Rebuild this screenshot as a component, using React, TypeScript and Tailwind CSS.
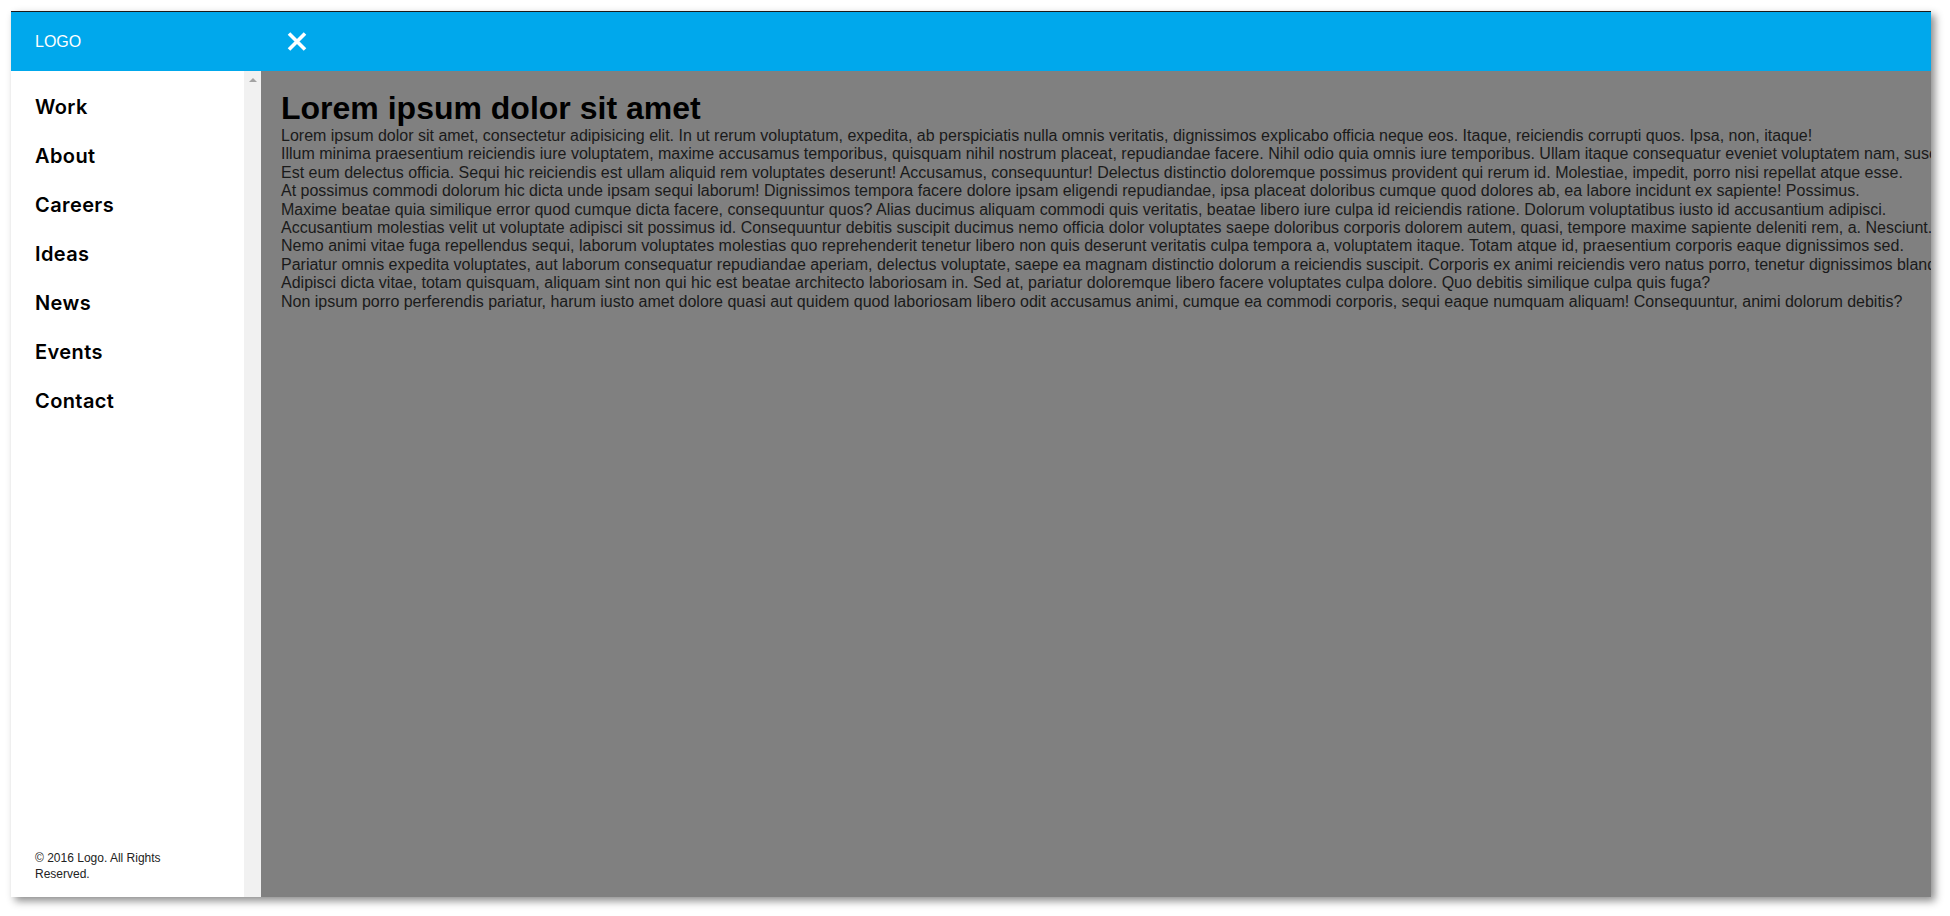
import React from "react";

const navItems = ["Work", "About", "Careers", "Ideas", "News", "Events", "Contact"];

const lines = [
  "Lorem ipsum dolor sit amet, consectetur adipisicing elit. In ut rerum voluptatum, expedita, ab perspiciatis nulla omnis veritatis, dignissimos explicabo officia neque eos. Itaque, reiciendis corrupti quos. Ipsa, non, itaque!",
  "Illum minima praesentium reiciendis iure voluptatem, maxime accusamus temporibus, quisquam nihil nostrum placeat, repudiandae facere. Nihil odio quia omnis iure temporibus. Ullam itaque consequatur eveniet voluptatem nam, suscipit.",
  "Est eum delectus officia. Sequi hic reiciendis est ullam aliquid rem voluptates deserunt! Accusamus, consequuntur! Delectus distinctio doloremque possimus provident qui rerum id. Molestiae, impedit, porro nisi repellat atque esse.",
  "At possimus commodi dolorum hic dicta unde ipsam sequi laborum! Dignissimos tempora facere dolore ipsam eligendi repudiandae, ipsa placeat doloribus cumque quod dolores ab, ea labore incidunt ex sapiente! Possimus.",
  "Maxime beatae quia similique error quod cumque dicta facere, consequuntur quos? Alias ducimus aliquam commodi quis veritatis, beatae libero iure culpa id reiciendis ratione. Dolorum voluptatibus iusto id accusantium adipisci.",
  "Accusantium molestias velit ut voluptate adipisci sit possimus id. Consequuntur debitis suscipit ducimus nemo officia dolor voluptates saepe doloribus corporis dolorem autem, quasi, tempore maxime sapiente deleniti rem, a. Nesciunt.",
  "Nemo animi vitae fuga repellendus sequi, laborum voluptates molestias quo reprehenderit tenetur libero non quis deserunt veritatis culpa tempora a, voluptatem itaque. Totam atque id, praesentium corporis eaque dignissimos sed.",
  "Pariatur omnis expedita voluptates, aut laborum consequatur repudiandae aperiam, delectus voluptate, saepe ea magnam distinctio dolorum a reiciendis suscipit. Corporis ex animi reiciendis vero natus porro, tenetur dignissimos blanditiis.",
  "Adipisci dicta vitae, totam quisquam, aliquam sint non qui hic est beatae architecto laboriosam in. Sed at, pariatur doloremque libero facere voluptates culpa dolore. Quo debitis similique culpa quis fuga?",
  "Non ipsum porro perferendis pariatur, harum iusto amet dolore quasi aut quidem quod laboriosam libero odit accusamus animi, cumque ea commodi corporis, sequi eaque numquam aliquam! Consequuntur, animi dolorum debitis?",
];

export default function App() {
  return (
    <div className="w-[1950px] h-[916px] bg-white pt-[11px] pl-[11px] overflow-hidden font-['Liberation_Sans',Arial,sans-serif]">
      <div className="w-[1920px] h-[886px] flex flex-col border-t border-[#1a1a1a] shadow-[4px_4px_8px_rgba(0,0,0,0.45)] bg-[#808080]">
        <header className="h-[59px] shrink-0 bg-[#00a8ec] flex items-center">
          <div className="w-[251px] pl-6 text-white text-[16px] leading-[18px]">LOGO</div>
          <button className="ml-[25px] w-[20px] h-[20px] flex items-center justify-center">
            <svg width="20" height="19" viewBox="0 0 20 19">
              <path d="M2 1.5 L18 17.5 M18 1.5 L2 17.5" stroke="white" strokeWidth="3.6" strokeLinecap="butt" fill="none" />
            </svg>
          </button>
        </header>
        <div className="flex flex-1 min-h-0">
          <aside className="w-[233px] shrink-0 bg-white flex flex-col">
            <nav className="pt-3 flex flex-col">
              {navItems.map((item) => (
                <a
                  key={item}
                  className="block px-6 py-3 text-[20px] leading-[25px] font-semibold tracking-[0.4px] text-black font-['Inter',sans-serif]"
                >
                  {item}
                </a>
              ))}
            </nav>
            <footer className="mt-auto pl-6 pb-[15px] max-w-[190px] text-[12px] leading-[15.5px] text-[#222]">
              © 2016 Logo. All Rights Reserved.
            </footer>
          </aside>
          <div className="w-[17px] shrink-0 bg-[#f1f1f1] flex justify-center pt-[7px]">
            <div className="w-0 h-0 border-l-[4px] border-r-[4px] border-b-[4px] border-l-transparent border-r-transparent border-b-[#a3a3a3]" />
          </div>
          <main className="flex-1 min-w-0 overflow-hidden bg-[#808080] px-5 pt-[19px]">
            <h1 className="text-[32px] leading-[37px] font-bold text-black whitespace-nowrap">Lorem ipsum dolor sit amet</h1>
            <p className="text-[16px] leading-[18.4px] text-[#1a1a1a] whitespace-nowrap">
              {lines.map((l, i) => (
                <React.Fragment key={i}>
                  {l}
                  {i < lines.length - 1 && <br />}
                </React.Fragment>
              ))}
            </p>
          </main>
        </div>
      </div>
    </div>
  );
}
